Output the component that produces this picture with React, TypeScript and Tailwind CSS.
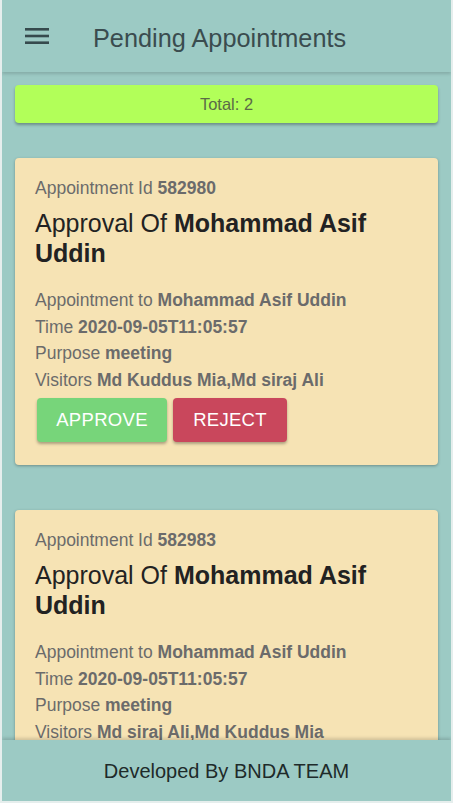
import React from 'react';

type Appointment = {
  id: string;
  name: string;
  to: string;
  time: string;
  purpose: string;
  visitors: string;
};

const appointments: Appointment[] = [
  {
    id: '582980',
    name: 'Mohammad Asif Uddin',
    to: 'Mohammad Asif Uddin',
    time: '2020-09-05T11:05:57',
    purpose: 'meeting',
    visitors: 'Md Kuddus Mia,Md siraj Ali',
  },
  {
    id: '582983',
    name: 'Mohammad Asif Uddin',
    to: 'Mohammad Asif Uddin',
    time: '2020-09-05T11:05:57',
    purpose: 'meeting',
    visitors: 'Md siraj Ali,Md Kuddus Mia',
  },
];

function MenuIcon() {
  return (
    <svg width="24" height="18" viewBox="0 0 24 18" className="text-[#364a4d]">
      <rect x="0" y="1" width="24" height="2.6" fill="currentColor" />
      <rect x="0" y="7.7" width="24" height="2.6" fill="currentColor" />
      <rect x="0" y="14.4" width="24" height="2.6" fill="currentColor" />
    </svg>
  );
}

function AppointmentCard({ a }: { a: Appointment }) {
  return (
    <div className="bg-[#f6e3b4] rounded-[4px] shadow-[0_1px_3px_rgba(0,0,0,0.3)] px-5 pt-[18px] pb-[23px]">
      <div className="text-[17.5px] leading-[24px] text-[#6b6b6b]">
        Appointment Id <b className="font-bold">{a.id}</b>
      </div>
      <h2 className="mt-[8px] text-[25px] leading-[30px] text-[#222]">
        Approval Of <b className="font-bold">{a.name}</b>
      </h2>
      <div className="mt-[19px] text-[17.5px] leading-[26.7px] text-[#6b6b6b]">
        <div>
          Appointment to <b className="font-bold">{a.to}</b>
        </div>
        <div>
          Time <b className="font-bold">{a.time}</b>
        </div>
        <div>
          Purpose <b className="font-bold">{a.purpose}</b>
        </div>
        <div>
          Visitors <b className="font-bold">{a.visitors}</b>
        </div>
      </div>
      <div className="mt-[4px] ml-[2px] flex gap-[6px]">
        <button className="h-[44px] w-[130px] rounded-[4px] bg-[#77d57a] text-white text-[18.5px] tracking-[0.3px] shadow-[0_2px_3px_rgba(0,0,0,0.3)]">
          APPROVE
        </button>
        <button className="h-[44px] w-[114px] rounded-[4px] bg-[#c9475c] text-white text-[18.5px] tracking-[0.3px] shadow-[0_2px_3px_rgba(0,0,0,0.3)]">
          REJECT
        </button>
      </div>
    </div>
  );
}

export default function App() {
  return (
    <div
      className="h-[803px] w-full flex flex-col overflow-hidden bg-[#9ccac4] border-x-2 border-b-2 border-[#e6eeed]"
      style={{ fontFamily: '"Liberation Sans", Arial, sans-serif' }}
    >
      {/* Header */}
      <header className="relative z-10 h-[72px] shrink-0 flex items-center shadow-[0_2px_3px_rgba(0,0,0,0.15)] bg-[#9ccac4]">
        <div className="ml-[23px] mr-[44px] flex items-center">
          <MenuIcon />
        </div>
        <h1 className="text-[25.3px] leading-[30px] mt-[4px] text-[#3a4c4f]">Pending Appointments</h1>
      </header>

      {/* Content */}
      <main className="flex-1 overflow-hidden px-[13px] pt-[13px]">
        <div className="h-[38px] rounded-[4px] bg-[#b2ff59] flex items-center justify-center text-[16.5px] text-[#5b6b47] shadow-[0_2px_3px_rgba(0,0,0,0.3)]">
          Total: 2
        </div>
        <div className="mt-[35px] flex flex-col gap-[45px]">
          {appointments.map((a) => (
            <AppointmentCard key={a.id} a={a} />
          ))}
        </div>
      </main>

      {/* Footer */}
      <footer className="relative z-10 h-[61px] shrink-0 flex items-center justify-center bg-[#9ccac4] shadow-[0_-2px_3px_rgba(0,0,0,0.15)]">
        <span className="text-[20px] leading-[24px] text-[#1e2a2a]">Developed By BNDA TEAM</span>
      </footer>
    </div>
  );
}
